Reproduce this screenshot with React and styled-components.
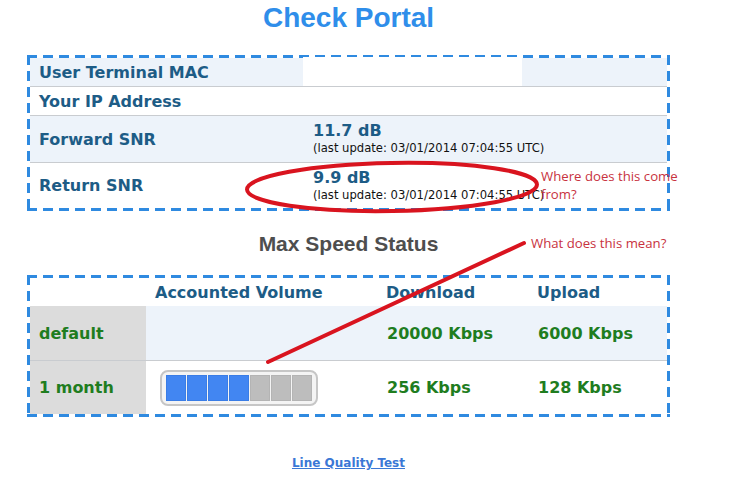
import React from 'react'
import styled, { createGlobalStyle } from 'styled-components'

const GlobalStyle = createGlobalStyle`
  html, body {
    margin: 0;
    padding: 0;
    background: #fff;
  }
  body {
    font-family: "DejaVu Sans", Verdana, sans-serif;
  }
`

const info = [
  { label: 'User Terminal MAC', blank: true, shade: true, height: 28 },
  { label: 'Your IP Address', height: 29 },
  { label: 'Forward SNR', value: '11.7 dB', note: '(last update: 03/01/2014 07:04:55 UTC)', shade: true, height: 47 },
  { label: 'Return SNR', value: '9.9 dB', note: '(last update: 03/01/2014 07:04:55 UTC)', height: 46 },
]

const speeds = [
  { name: 'default', down: '20000 Kbps', up: '6000 Kbps', shade: true },
  { name: '1 month', down: '256 Kbps', up: '128 Kbps', used: 4, total: 7 },
]

const App = () => {
  return (
    <>
      <GlobalStyle />
      <Page>
        <Main>
          <Title>Check Portal</Title>

          <Panel>
            {info.map((row, i) => (
              <InfoRow key={row.label} shade={row.shade} first={i === 0} style={{ height: row.height }}>
                <InfoLabel>{row.label}</InfoLabel>
                <InfoValue>
                  {row.blank && <Blank />}
                  {row.value && <SnrValue>{row.value}</SnrValue>}
                  {row.note && <SnrNote>{row.note}</SnrNote>}
                </InfoValue>
              </InfoRow>
            ))}
          </Panel>

          <SubTitle>Max Speed Status</SubTitle>

          <Panel>
            <SpeedGrid>
              <HeadCell />
              <HeadCell>Accounted Volume</HeadCell>
              <HeadCell>Download</HeadCell>
              <HeadCell>Upload</HeadCell>
              {speeds.map((row, i) => (
                <React.Fragment key={row.name}>
                  <NameCell divider={i > 0}>{row.name}</NameCell>
                  <SpeedCell shade={row.shade} divider={i > 0}>
                    {row.total && (
                      <Meter>
                        {Array.from({ length: row.total }).map((_, n) => (
                          <Segment key={n} on={n < row.used} />
                        ))}
                      </Meter>
                    )}
                  </SpeedCell>
                  <SpeedCell shade={row.shade} divider={i > 0}>{row.down}</SpeedCell>
                  <SpeedCell shade={row.shade} divider={i > 0}>{row.up}</SpeedCell>
                </React.Fragment>
              ))}
            </SpeedGrid>
          </Panel>

          <TestLink href="#">Line Quality Test</TestLink>
        </Main>

        <Marks viewBox="0 0 730 485" width="730" height="485">
          <ellipse cx="392" cy="187" rx="145" ry="24" fill="none" stroke="#d9141f" strokeWidth="4" transform="rotate(-1 392 187)" />
          <line x1="268" y1="362" x2="524" y2="243" stroke="#d9141f" strokeWidth="4" strokeLinecap="round" />
        </Marks>
        <Note top={167} left={541}>Where does this come<br />from?</Note>
        <Note top={234} left={531}>What does this mean?</Note>
      </Page>
    </>
  )
}

export default App

const Page = styled.div`
  position: relative;
  width: 730px;
  height: 485px;
  overflow: hidden;
`

const Main = styled.main`
  width: 643px;
  margin-left: 27px;
  display: flex;
  flex-direction: column;
`

const Title = styled.h1`
  margin: 0 0 19px;
  font: bold 28px/36px "Liberation Sans", Arial, sans-serif;
  color: #2f8eea;
  text-align: center;
`

// long dashes (10 on, 6 off) like the original page, drawn as gradients
const dash = '#2f8ae0'
const Panel = styled.section`
  padding: 3px;
  display: flex;
  flex-direction: column;
  background:
    repeating-linear-gradient(90deg, ${dash} 0 10px, transparent 10px 16px) top left / 100% 3px no-repeat,
    repeating-linear-gradient(90deg, ${dash} 0 10px, transparent 10px 16px) bottom left / 100% 3px no-repeat,
    repeating-linear-gradient(180deg, ${dash} 0 10px, transparent 10px 16px) top left / 3px 100% no-repeat,
    repeating-linear-gradient(180deg, ${dash} 0 10px, transparent 10px 16px) top right / 3px 100% no-repeat;
`

const InfoRow = styled.div`
  display: grid;
  grid-template-columns: 273px 1fr;
  background: ${p => (p.shade ? '#edf3fa' : '#fff')};
  border-top: ${p => (p.first ? 'none' : '1px solid #c9ccd0')};
  box-sizing: border-box;
`

const InfoLabel = styled.div`
  display: flex;
  align-items: center;
  padding-left: 9px;
  font-weight: bold;
  font-size: 16px;
  color: #1d5c86;
`

const InfoValue = styled.div`
  display: flex;
  flex-direction: column;
  justify-content: center;
  padding-left: 10px;
`

const Blank = styled.div`
  width: 219px;
  height: 29px;
  margin: -1px 0 0 -10px;
  background: #fff;
`

const SnrValue = styled.div`
  font-weight: bold;
  font-size: 16px;
  line-height: 18px;
  color: #1d5c86;
`

const SnrNote = styled.div`
  font-size: 11.6px;
  line-height: 16px;
  color: #111;
`

const SubTitle = styled.h2`
  margin: 20px 0 18px;
  font: bold 21px/26px "Liberation Sans", Arial, sans-serif;
  color: #4e4e4e;
  text-align: center;
`

const SpeedGrid = styled.div`
  display: grid;
  grid-template-columns: 116px 231px 151px 1fr;
  grid-template-rows: 28px 54px 54px;
`

const HeadCell = styled.div`
  display: flex;
  align-items: center;
  padding-left: 9px;
  font-weight: bold;
  font-size: 16px;
  color: #1d5c86;
  background: #fff;
`

const NameCell = styled.div`
  display: flex;
  align-items: center;
  padding-left: 9px;
  font-weight: bold;
  font-size: 16px;
  color: #1f7d1f;
  background: #dcdcdc;
  border-top: ${p => (p.divider ? '1px solid #c9ccd0' : 'none')};
`

const SpeedCell = styled.div`
  display: flex;
  align-items: center;
  padding-left: 10px;
  font-weight: bold;
  font-size: 16px;
  color: #1f7d1f;
  background: ${p => (p.shade ? '#edf3fa' : '#fff')};
  border-top: ${p => (p.divider ? '1px solid #c9ccd0' : 'none')};
`

const Meter = styled.div`
  display: flex;
  gap: 1px;
  margin: 1px 0 0 4px;
  padding: 3px 4px;
  border: 2px solid #c6c6c6;
  border-radius: 8px;
  background: #f4f4f4;
`

const Segment = styled.div`
  width: 20px;
  height: 26px;
  background: ${p => (p.on ? '#4286f2' : '#bdbdbd')};
  box-shadow: inset 0 0 0 1px ${p => (p.on ? '#3a7de6' : '#b4b4b4')};
`

const TestLink = styled.a`
  align-self: center;
  margin-top: 39px;
  font-weight: bold;
  font-size: 12px;
  color: #3b78d6;
  text-decoration: underline;
`

const Marks = styled.svg`
  position: absolute;
  left: 0;
  top: 0;
  pointer-events: none;
`

const Note = styled.div`
  position: absolute;
  top: ${p => p.top}px;
  left: ${p => p.left}px;
  font-family: "Open Sans", sans-serif;
  font-size: 13.2px;
  line-height: 18px;
  color: #c8323e;
`
